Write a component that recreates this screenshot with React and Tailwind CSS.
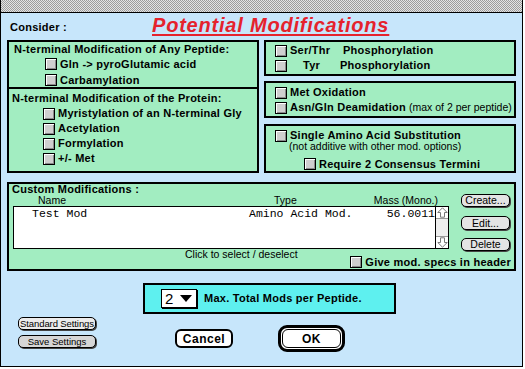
import React from 'react';

const bold = "font-['Liberation_Sans',Arial,sans-serif] font-bold text-[11px] tracking-[0.25px] text-black";
const plain = "font-['Liberation_Sans',Arial,sans-serif] text-[10.5px] text-black";
const mono = "font-['Liberation_Mono','Courier_New',monospace] text-[11.5px] text-black";

// classic grey check box
function Box() {
  return <span className="inline-block w-[12px] h-[12px] shrink-0 border border-black bg-[#cfcfcf] shadow-[inset_1px_1px_0_#ffffff,inset_-1px_-1px_0_#8a8a8a]" />;
}

function Check({ children, className = '' }) {
  return (
    <div className={`flex items-center shrink-0 ${className}`}>
      <Box />
      <span className={`ml-[3px] whitespace-nowrap ${bold}`}>{children}</span>
    </div>
  );
}

function Panel({ className = '', children }) {
  return <div className={`border-2 border-black bg-[#a2edc1] ${className}`}>{children}</div>;
}

function SmallButton({ children, className = '' }) {
  return (
    <div className={`flex items-center justify-center rounded-[5px] border border-black shadow-[1px_1px_0_#444] leading-none whitespace-nowrap font-['Liberation_Sans',Arial,sans-serif] text-black ${className}`}>
      {children}
    </div>
  );
}

function Arrow({ down }) {
  return (
    <svg width="11" height="11" viewBox="0 0 11 11" className={down ? 'rotate-180' : ''}>
      <path d="M5.5 0.8 L10.2 5.5 L7.5 5.5 L7.5 10.2 L3.5 10.2 L3.5 5.5 L0.8 5.5 Z" fill="#fff" stroke="#7a7a7a" strokeWidth="1" />
    </svg>
  );
}

export default function App() {
  return (
    <div className="w-[525px] h-[369px] bg-white overflow-hidden">
      <div className="w-[523px] h-[367px] border-l border-r border-b border-black bg-[#c7e6fb] flex flex-col">
        {/* title bar strip */}
        <div className="h-[13px] shrink-0 border-b border-black bg-[repeating-conic-gradient(#9c9c9c_0_25%,#e4e4e4_0_50%)] bg-[length:2px_2px]" />

        {/* header */}
        <div className="h-[27px] shrink-0 flex items-start">
          <span className={`mt-[7px] ml-[9px] w-[142px] leading-[14px] ${bold}`}>Consider :</span>
          <span className="mt-[2px] leading-[20px] text-[20px] tracking-[0.8px] font-bold italic underline decoration-2 underline-offset-[2px] text-[#e5222d] font-['Liberation_Sans',Arial,sans-serif]">
            Potential Modifications
          </span>
        </div>

        {/* option panels */}
        <div className="flex gap-[5px] ml-[6px] h-[133px] shrink-0">
          <Panel className="w-[252px] flex flex-col">
            <div className="h-[47px] border-b-2 border-black">
              <div className={`pl-[5px] h-[14px] leading-[14px] ${bold}`}>N-terminal Modification of Any Peptide:</div>
              <Check className="h-[16px] pl-[36px]">Gln -&gt; pyroGlutamic acid</Check>
              <Check className="h-[16px] pl-[36px]">Carbamylation</Check>
            </div>
            <div className="pt-[2px]">
              <div className={`pl-[3px] h-[15px] leading-[15px] ${bold}`}>N-terminal Modification of the Protein:</div>
              <Check className="h-[15px] pl-[34px]">Myristylation of an N-terminal Gly</Check>
              <Check className="h-[15px] pl-[34px]">Acetylation</Check>
              <Check className="h-[15px] pl-[34px]">Formylation</Check>
              <Check className="h-[15px] pl-[34px]">+/- Met</Check>
            </div>
          </Panel>

          <div className="w-[252px] flex flex-col">
            <Panel className="h-[36px] pt-[1px] pl-[9px]">
              <div className="flex items-center h-[15px]">
                <Box />
                <span className={`ml-[3px] w-[53px] ${bold}`}>Ser/Thr</span>
                <span className={bold}>Phosphorylation</span>
              </div>
              <div className="flex items-center h-[15px]">
                <Box />
                <span className={`ml-[16px] w-[37px] ${bold}`}>Tyr</span>
                <span className={bold}>Phosphorylation</span>
              </div>
            </Panel>
            <Panel className="h-[37px] mt-[5px] pt-[2px] pl-[9px]">
              <Check className="h-[15px]">Met Oxidation</Check>
              <div className="flex items-center h-[15px]">
                <Box />
                <span className={`ml-[3px] whitespace-nowrap ${bold}`}>Asn/Gln Deamidation</span>
                <span className={`ml-[3px] whitespace-nowrap ${plain}`}>(max of 2 per peptide)</span>
              </div>
            </Panel>
            <Panel className="h-[49px] mt-[6px] pt-[3px] pl-[9px]">
              <Check className="h-[13px]">Single Amino Acid Substitution</Check>
              <div className={`h-[9px] leading-[9px] pl-[14px] whitespace-nowrap ${plain}`}>(not additive with other mod. options)</div>
              <Check className="h-[14px] mt-[6px] pl-[29px]">Require 2 Consensus Termini</Check>
            </Panel>
          </div>
        </div>

        {/* custom modifications */}
        <Panel className="w-[509px] h-[89px] ml-[6px] mt-[9px] shrink-0">
          <div className={`h-[10px] leading-[10px] pl-[3px] ${bold}`}>Custom Modifications :</div>
          <div className="flex h-[57px]">
            <div className="ml-[4px] w-[436px]">
              <div className={`flex h-[12px] leading-[12px] pl-[25px] pr-[11px] ${plain}`}>
                <span className="w-[236px]">Name</span>
                <span className="flex-1">Type</span>
                <span>Mass (Mono.)</span>
              </div>
              <div className="h-[43px] border border-black bg-white flex">
                <div className={`flex-1 flex h-[14px] leading-[14px] pl-[18px] ${mono}`}>
                  <span className="w-[217px]">Test Mod</span>
                  <span className="flex-1">Amino Acid Mod.</span>
                  <span>56.0011</span>
                </div>
                <div className="w-[13px] border-l border-black bg-[#eeeeee] flex flex-col justify-between">
                  <div className="h-[12px] bg-white border-b border-[#999] flex items-center justify-center"><Arrow /></div>
                  <div className="h-[12px] bg-white border-t border-[#999] flex items-center justify-center"><Arrow down /></div>
                </div>
              </div>
            </div>
            <div className="ml-[12px] w-[49px] flex flex-col">
              <SmallButton className="h-[13px] bg-[#e4e4e4] text-[10.5px]">Create...</SmallButton>
              <SmallButton className="h-[14px] mt-[9px] bg-[#e4e4e4] text-[10.5px]">Edit...</SmallButton>
              <SmallButton className="h-[13px] mt-[8px] bg-[#e4e4e4] text-[10.5px]">Delete</SmallButton>
            </div>
          </div>
          <div className="flex items-start">
            <div className={`-mt-[2px] ml-[176px] h-[10px] leading-[10px] whitespace-nowrap shrink-0 ${plain}`}>Click to select / deselect</div>
            <div className="flex-1" />
            <Check className="mt-[5px] h-[12px] mr-[3px]">Give mod. specs in header</Check>
          </div>
        </Panel>

        {/* max mods */}
        <div className="w-[253px] h-[31px] ml-[142px] mt-[12px] shrink-0 border-2 border-black bg-[#5ef0ef] flex items-center">
          <div className="ml-[16px] w-[36px] h-[19px] border border-black bg-white shadow-[1px_1px_0_#000] flex items-center">
            <span className="ml-[3px] text-[15px] leading-none font-['Liberation_Sans',Arial,sans-serif]">2</span>
            <svg width="12" height="7" viewBox="0 0 12 7" className="ml-[7px]"><path d="M0 0 L12 0 L6 7 Z" fill="#000" /></svg>
          </div>
          <span className={`ml-[7px] ${bold}`}>Max. Total Mods per Peptide.</span>
        </div>

        {/* bottom buttons */}
        <div className="flex items-start">
          <div className="ml-[17px] w-[78px] flex flex-col">
            <SmallButton className="h-[13px] mt-[3px] bg-[#ececec] text-[9.5px] tracking-[-0.1px]">Standard Settings</SmallButton>
            <SmallButton className="h-[13px] mt-[5px] bg-[#d6d6d6] text-[9.5px]">Save Settings</SmallButton>
          </div>
          <div className="ml-[79px] mt-[15px] w-[58px] h-[19px] rounded-[6px] border-2 border-black bg-white flex items-center justify-center text-[12px] tracking-[0.5px] font-['Liberation_Sans',Arial,sans-serif] font-bold">
            Cancel
          </div>
          <div className="ml-[45px] mt-[11px] w-[67px] h-[27px] rounded-[9px] border-[3px] border-black bg-white p-[1px]">
            <div className="w-full h-full rounded-[6px] border border-black flex items-center justify-center text-[12px] tracking-[0.5px] font-['Liberation_Sans',Arial,sans-serif] font-bold">
              OK
            </div>
          </div>
        </div>
      </div>
    </div>
  );
}
